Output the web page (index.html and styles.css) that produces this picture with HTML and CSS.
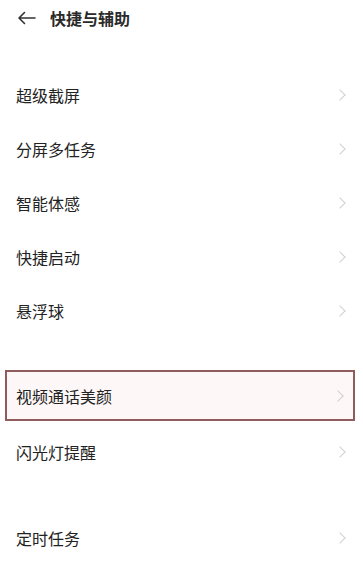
FILE: index.html
```html
<!DOCTYPE html>
<html lang="zh-CN">
<head>
    <meta charset="UTF-8">
    <meta name="viewport" content="width=device-width, initial-scale=1.0">
    <title>快捷与辅助</title>
    <link rel="stylesheet" href="styles.css">
</head>
<body>
    <div class="page">
        <div class="top-bar">
            <svg class="back-icon" width="19" height="14" viewBox="0 0 19 14">
                <path d="M18 7H2M7.5 1.5L2 7l5.5 5.5" fill="none" stroke="#333" stroke-width="1.6" stroke-linecap="round" stroke-linejoin="round"/>
            </svg>
            <span class="title">快捷与辅助</span>
        </div>

        <div class="group">
            <div class="row"><span>超级截屏</span><i class="chev"></i></div>
            <div class="row"><span>分屏多任务</span><i class="chev"></i></div>
            <div class="row"><span>智能体感</span><i class="chev"></i></div>
            <div class="row"><span>快捷启动</span><i class="chev"></i></div>
            <div class="row"><span>悬浮球</span><i class="chev"></i></div>
        </div>

        <div class="group">
            <div class="row marked"><span>视频通话美颜</span><i class="chev"></i></div>
            <div class="row"><span>闪光灯提醒</span><i class="chev"></i></div>
        </div>

        <div class="group">
            <div class="row"><span>定时任务</span><i class="chev"></i></div>
        </div>
    </div>
</body>
</html>
```

FILE: styles.css
```css
body {
    margin: 0;
    background-color: #ffffff;
    font-family: "Noto Sans CJK SC", "Noto Sans", sans-serif;
    color: #222;
}
.page {
    width: 363px;
    height: 563px;
    overflow: hidden;
}
.top-bar {
    height: 36px;
    display: flex;
    align-items: center;
    padding-left: 17px;
}
.back-icon {
    margin-right: 14px;
}
.title {
    font-size: 16px;
    font-weight: 700;
    color: #2a2a2a;
}
.group {
    margin-top: 32px;
}
.row {
    height: 54px;
    display: flex;
    align-items: center;
    justify-content: space-between;
    padding: 0 16px;
    font-size: 16px;
    box-sizing: border-box;
}
.chev {
    width: 7px;
    height: 7px;
    border-top: 1.5px solid #d0d0d0;
    border-right: 1.5px solid #d0d0d0;
    transform: rotate(45deg);
    margin-right: 3px;
}
/* 红框标注的那一行 */
.row.marked {
    height: 51px;
    margin: 0 8px 4px 5px;
    padding: 0 8px 0 9px;
    border: 2px solid #8e5c5c;
    background-color: #fdf7f7;
}
```
